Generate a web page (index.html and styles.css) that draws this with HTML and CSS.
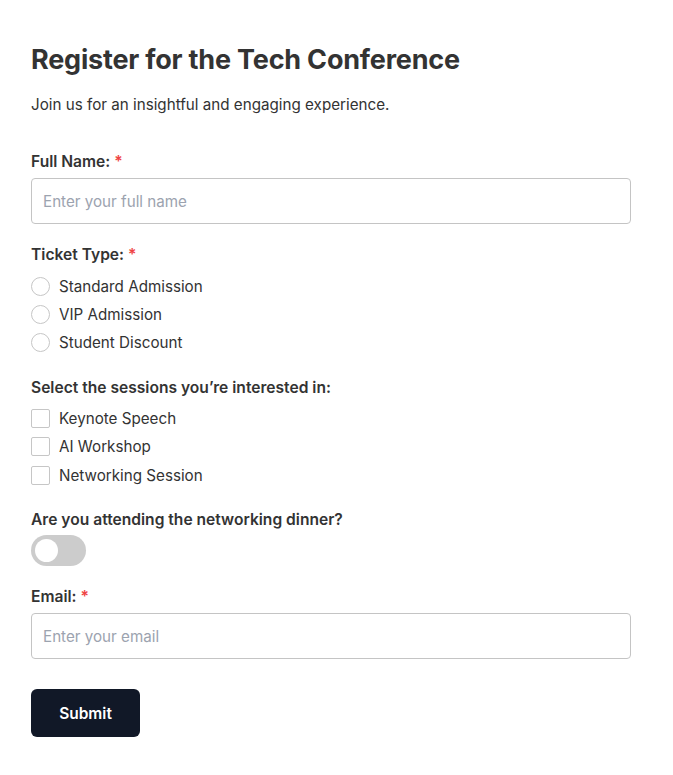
FILE: index.html
```html
<!DOCTYPE html>
<html lang="en">
<head>
<meta charset="utf-8">
<title>Register for the Tech Conference</title>
<link rel="stylesheet" href="styles.css">
</head>
<body>
<main class="page">
  <h1 class="title">Register for the Tech Conference</h1>
  <p class="subtitle">Join us for an insightful and engaging experience.</p>
  <form class="form">
    <div class="field">
      <label class="label" for="name">Full Name: <span class="req">*</span></label>
      <input class="input" id="name" type="text" placeholder="Enter your full name">
    </div>
    <div class="field">
      <span class="label label-group">Ticket Type: <span class="req">*</span></span>
      <div class="options">
        <label class="option"><input class="radio" type="radio" name="ticket"><span>Standard Admission</span></label>
        <label class="option"><input class="radio" type="radio" name="ticket"><span>VIP Admission</span></label>
        <label class="option"><input class="radio" type="radio" name="ticket"><span>Student Discount</span></label>
      </div>
    </div>
    <div class="field">
      <span class="label label-group">Select the sessions you’re interested in:</span>
      <div class="options">
        <label class="option"><input class="check" type="checkbox"><span>Keynote Speech</span></label>
        <label class="option"><input class="check" type="checkbox"><span>AI Workshop</span></label>
        <label class="option"><input class="check" type="checkbox"><span>Networking Session</span></label>
      </div>
    </div>
    <div class="field">
      <span class="label label-toggle">Are you attending the networking dinner?</span>
      <label class="toggle"><input class="toggle-input" type="checkbox"><span class="toggle-track"><span class="toggle-knob"></span></span></label>
    </div>
    <div class="field">
      <label class="label" for="email">Email: <span class="req">*</span></label>
      <input class="input" id="email" type="email" placeholder="Enter your email">
    </div>
    <div class="actions">
      <button class="submit" type="button">Submit</button>
    </div>
  </form>
</main>
</body>
</html>
```
FILE: styles.css
```css
* { box-sizing: border-box; }
body {
  margin: 0;
  background: #ffffff;
  font-family: Inter, "Noto Sans", sans-serif;
  color: #333333;
}
.page {
  width: 662px;
  padding: 43px 31px 30px;
}
.title {
  margin: 0;
  font-size: 27px;
  line-height: 34px;
  font-weight: 700;
  color: #333333;
  letter-spacing: -0.2px;
}
.subtitle {
  margin: 16px 0 0;
  font-size: 15.2px;
  line-height: 24px;
  color: #333333;
}
.form {
  margin-top: 34px;
  display: flex;
  flex-direction: column;
  gap: 20px;
}
.field {
  display: flex;
  flex-direction: column;
  align-items: flex-start;
}
.label {
  font-size: 15.6px;
  line-height: 22px;
  font-weight: 600;
  color: #333333;
  margin-bottom: 5px;
}
.label-group { margin-bottom: 6px; }
.label-toggle { margin-bottom: 4px; }
.req { color: #ef4444; }
.input {
  width: 600px;
  height: 46px;
  border: 1px solid #c4c4c4;
  border-radius: 4px;
  padding: 0 11px;
  font-family: inherit;
  font-size: 15.2px;
  color: #333;
  outline: none;
}
.input::placeholder { color: #9ca3af; }
.options { display: flex; flex-direction: column; }
.option {
  display: flex;
  align-items: center;
  height: 28.2px;
  font-size: 15.2px;
  color: #333333;
  gap: 9px;
}
.radio, .check {
  appearance: none;
  -webkit-appearance: none;
  margin: 0;
  width: 19px;
  height: 19px;
  border: 1px solid #c6c6c6;
  background: #fff;
}
.radio { border-radius: 50%; }
.check { border-radius: 2px; }
.toggle { display: inline-flex; }
.toggle-input { display: none; }
.toggle-track {
  width: 55px;
  height: 31px;
  border-radius: 16px;
  background: #cccccc;
  padding: 4px;
  display: flex;
  align-items: center;
}
.toggle-knob {
  width: 23px;
  height: 23px;
  border-radius: 50%;
  background: #ffffff;
}
.actions { margin-top: 10px; }
.submit {
  width: 109px;
  height: 48px;
  border: 0;
  border-radius: 6px;
  background: #111827;
  color: #ffffff;
  font-family: inherit;
  font-size: 15.5px;
  font-weight: 600;
}
```
